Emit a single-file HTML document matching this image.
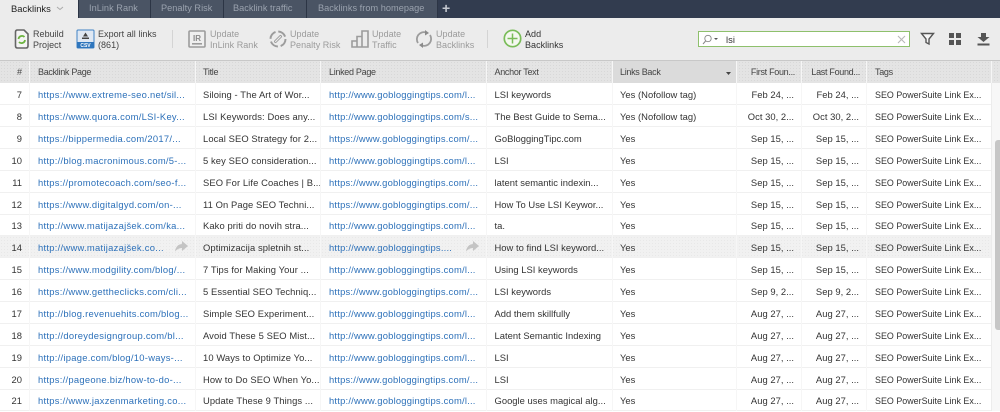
<!DOCTYPE html>
<html><head><meta charset="utf-8"><style>
html,body{margin:0;padding:0}
body{width:1000px;height:411px;overflow:hidden;position:relative;background:#fff;font-family:"Liberation Sans",sans-serif;font-size:9.4px;letter-spacing:.03px;color:#333}
#top{position:absolute;left:0;top:0;width:1000px;height:18px;background:#323c4f}
.tab{position:absolute;top:0;height:18px;background:#4a5464;border-right:1px solid #2c3545;color:#9aa2ae;line-height:17px;box-sizing:border-box;padding-left:10px;white-space:nowrap;font-size:9.2px}
#bar{position:absolute;left:0;top:18px;width:1000px;height:42px;background:#ececec;border-bottom:1px solid #c8c8c8}
.t{position:absolute;line-height:10.5px;white-space:nowrap;color:#444;font-size:9px}
.g{color:#9b9b9b}
svg{position:absolute;overflow:visible}
#hd{position:absolute;left:0;top:61px;width:1000px;height:22px;background-color:#e4e4e4;background-image:radial-gradient(#d8d8d8 .5px,transparent .6px);background-size:3px 3px}
.h{position:absolute;top:0;height:22px;line-height:23px;color:#444;white-space:nowrap;font-size:9px;letter-spacing:-.3px}
.sp{position:absolute;top:0;width:1px;height:22px;background:#f6f6f6}
.r{position:absolute;left:0;width:991px;height:22px;border-bottom:1px solid #f0f0f0;box-sizing:border-box;line-height:22px;white-space:nowrap}
.r span{position:absolute;top:1px}
.n{right:969px;color:#333}
.a{left:38px;color:#2c70b9;letter-spacing:.28px}
.b{left:203px;letter-spacing:.1px}
.c{left:329px;color:#2c70b9;letter-spacing:.22px}
.d{left:494.5px}
.e{left:620px}
.f{right:197px}
.l{right:132px}
.k{left:875px;font-size:8.9px}
.v{position:absolute;top:83px;width:1px;height:328px;background:#f6f6f6}
#sel{position:absolute;left:0;top:236px;width:991px;height:22px;background-color:#f1f1f1;background-image:radial-gradient(#e8e8e8 .5px,transparent .6px);background-size:3px 3px}
</style></head><body>
<div id="top"></div>
<div class="tab" style="left:0;width:79px;background:#ececec;color:#222;border-right:1px solid #2c3545;padding-left:11px;font-size:9.4px">Backlinks</div>
<svg style="left:56px;top:6px" width="8" height="5"><path d="M1 1 L4 3.5 L7 1" fill="none" stroke="#aaa" stroke-width="1"/></svg>
<div class="tab" style="left:79px;width:72px">InLink Rank</div>
<div class="tab" style="left:151px;width:73px">Penalty Risk</div>
<div class="tab" style="left:224px;width:83px;padding-left:9px">Backlink traffic</div>
<div class="tab" style="left:307px;width:131px;padding-left:11px">Backlinks from homepage</div>
<div style="position:absolute;left:442px;top:0;color:#c5c9d0;font-size:14px;line-height:17px;font-weight:bold">+</div>

<div id="bar"></div>
<svg style="left:14px;top:29px" width="15" height="20"><path d="M1.5 3 Q1.5 1 3.5 1 H10 L14 5 V17 Q14 19 12 19 H3.5 Q1.5 19 1.5 17 Z" fill="#f4f4f4" stroke="#666" stroke-width="1.6"/><path d="M4.5 10 A3.5 3.5 0 0 1 10.5 8" fill="none" stroke="#6cb33f" stroke-width="1.8"/><path d="M11 11 A3.5 3.5 0 0 1 5 13" fill="none" stroke="#6cb33f" stroke-width="1.8"/></svg>
<div class="t" style="left:33px;top:29px">Rebuild<br>Project</div>
<svg style="left:77px;top:30px" width="17" height="18"><rect x="0" y="0" width="17" height="18" rx="1" fill="#dfe8f3" stroke="#3f82c4"/><rect x="0" y="12" width="17" height="6" fill="#2f76bd"/><rect x="5" y="7.5" width="7" height="1.5" fill="#444"/><path d="M8.5 2.5 L11 6.5 H6 Z" fill="#444"/><text x="8.5" y="17" font-size="5" font-family="Liberation Sans" font-weight="bold" fill="#fff" text-anchor="middle" letter-spacing="0">CSV</text></svg>
<div class="t" style="left:98px;top:29px">Export all links<br>(861)</div>
<div style="position:absolute;left:172px;top:30px;width:1px;height:18px;background:#d4d4d4"></div>
<svg style="left:188px;top:30px" width="18" height="18"><rect x="1" y="1" width="16" height="16" rx="1" fill="#efefef" stroke="#9c9c9c" stroke-width="1.6"/><rect x="4" y="13" width="10" height="1.6" fill="#9c9c9c"/><text x="9" y="11" font-size="8" font-weight="bold" font-family="Liberation Sans" fill="#8a8a8a" text-anchor="middle" letter-spacing="0">IR</text></svg>
<div class="t g" style="left:210px;top:29px">Update<br>InLink Rank</div>
<svg style="left:269px;top:30px" width="18" height="18"><circle cx="9" cy="9" r="7.5" fill="none" stroke="#9c9c9c" stroke-width="2" stroke-dasharray="9 2.8"/><path d="M6.5 11.5 L11.5 6.5" stroke="#9c9c9c" stroke-width="3" stroke-linecap="round"/><path d="M6.5 11.5 L11.5 6.5" stroke="#ececec" stroke-width="1.2" stroke-linecap="round"/></svg>
<div class="t g" style="left:290px;top:29px">Update<br>Penalty Risk</div>
<svg style="left:351px;top:30px" width="18" height="18"><path d="M1 17 V11 H6 V17 Z M6 17 V6.5 H11 V17 Z M11 17 V1 H17 V17 Z" fill="none" stroke="#9c9c9c" stroke-width="1.6"/></svg>
<div class="t g" style="left:372px;top:29px">Update<br>Traffic</div>
<svg style="left:415px;top:30px" width="18" height="18"><path d="M3 13 A7 7 0 0 1 11 2.5" fill="none" stroke="#9c9c9c" stroke-width="1.8"/><path d="M15 5 A7 7 0 0 1 7 15.5" fill="none" stroke="#9c9c9c" stroke-width="1.8"/><path d="M10 0 L14 3 L10 5.5 Z M8 12.5 L4 15 L8 18 Z" fill="#8a8a8a"/></svg>
<div class="t g" style="left:436px;top:29px">Update<br>Backlinks</div>
<div style="position:absolute;left:487px;top:30px;width:1px;height:18px;background:#d4d4d4"></div>
<svg style="left:503px;top:29px" width="19" height="19"><circle cx="9.5" cy="9.5" r="8.2" fill="#f4f8ef" stroke="#79bc58" stroke-width="1.7"/><path d="M9.5 4.5 V14.5 M4.5 9.5 H14.5" stroke="#79bc58" stroke-width="1.5"/></svg>
<div class="t" style="left:525px;top:29px;color:#333">Add<br>Backlinks</div>
<div style="position:absolute;left:698px;top:31px;width:212px;height:16px;box-sizing:border-box;background:#fff;border:1px solid #8ec06c"></div>
<svg style="left:702px;top:34px" width="16" height="11"><circle cx="6" cy="4.5" r="3.2" fill="none" stroke="#888" stroke-width=".9"/><path d="M3.6 7 L1 10" stroke="#888" stroke-width="1"/><path d="M12 4 H16 L14 6 Z" fill="#555"/></svg>
<div style="position:absolute;left:726px;top:32px;line-height:15px;color:#333">lsi</div>
<svg style="left:897px;top:35px" width="9" height="9"><path d="M1 1 L8 8 M8 1 L1 8" stroke="#b8b8b8" stroke-width="1.1"/></svg>
<svg style="left:921px;top:33px" width="13" height="12"><path d="M.5 .5 H12.5 L8 6 V11 L5 9.5 V6 Z" fill="#f6f6f6" stroke="#555" stroke-width="1.4"/></svg>
<svg style="left:949px;top:33px" width="12" height="12"><path d="M0 0 H5 V5 H0 Z M7 0 H12 V5 H7 Z M0 7 H5 V12 H0 Z M7 7 H12 V12 H7 Z" fill="#555"/></svg>
<svg style="left:977px;top:33px" width="13" height="13"><path d="M4 0 H9 V4 H12.5 L6.5 9 L.5 4 H4 Z" fill="#555"/><rect x=".5" y="10.5" width="12" height="2" fill="#555"/></svg>

<div id="hd">
<div style="position:absolute;left:613px;top:0;width:123px;height:22px;background:#dbdbdb"></div>
<div class="h" style="left:17px">#</div>
<div class="h" style="left:38px">Backlink Page</div>
<div class="h" style="left:203px">Title</div>
<div class="h" style="left:329px">Linked Page</div>
<div class="h" style="left:494.5px">Anchor Text</div>
<div class="h" style="left:620px">Links Back</div>
<svg style="left:726px;top:11px" width="5" height="3"><path d="M0 0 H5 L2.5 3 Z" fill="#444"/></svg>
<div class="h" style="right:205px">First Foun...</div>
<div class="h" style="right:140px">Last Found...</div>
<div class="h" style="left:875px">Tags</div>
<div class="sp" style="left:29px"></div><div class="sp" style="left:195px"></div><div class="sp" style="left:320px"></div><div class="sp" style="left:486px"></div><div class="sp" style="left:612px"></div><div class="sp" style="left:736px"></div><div class="sp" style="left:801px"></div><div class="sp" style="left:866px"></div><div class="sp" style="left:991px"></div>
</div>

<div id="sel"></div>

<div class="r" style="top:83px"><span class="n">7</span><span class="a">https://www.extreme-seo.net/sil...</span><span class="b">Siloing - The Art of Wor...</span><span class="c">http://www.gobloggingtips.com/l...</span><span class="d">LSI keywords</span><span class="e">Yes (Nofollow tag)</span><span class="f">Feb 24, ...</span><span class="l">Feb 24, ...</span><span class="k">SEO PowerSuite Link Ex...</span></div>
<div class="r" style="top:105px"><span class="n">8</span><span class="a">https://www.quora.com/LSI-Key...</span><span class="b">LSI Keywords: Does any...</span><span class="c">http://www.gobloggingtips.com/s...</span><span class="d">The Best Guide to Sema...</span><span class="e">Yes (Nofollow tag)</span><span class="f">Oct 30, 2...</span><span class="l">Oct 30, 2...</span><span class="k">SEO PowerSuite Link Ex...</span></div>
<div class="r" style="top:127px"><span class="n">9</span><span class="a">https://bippermedia.com/2017/...</span><span class="b">Local SEO Strategy for 2...</span><span class="c">https://www.gobloggingtips.com/...</span><span class="d">GoBloggingTipc.com</span><span class="e">Yes</span><span class="f">Sep 15, ...</span><span class="l">Sep 15, ...</span><span class="k">SEO PowerSuite Link Ex...</span></div>
<div class="r" style="top:149px"><span class="n">10</span><span class="a">http://blog.macronimous.com/5-...</span><span class="b">5 key SEO consideration...</span><span class="c">http://www.gobloggingtips.com/l...</span><span class="d">LSI</span><span class="e">Yes</span><span class="f">Sep 15, ...</span><span class="l">Sep 15, ...</span><span class="k">SEO PowerSuite Link Ex...</span></div>
<div class="r" style="top:171px"><span class="n">11</span><span class="a">https://promotecoach.com/seo-f...</span><span class="b">SEO For Life Coaches | B...</span><span class="c">https://www.gobloggingtips.com/...</span><span class="d">latent semantic indexin...</span><span class="e">Yes</span><span class="f">Sep 15, ...</span><span class="l">Sep 15, ...</span><span class="k">SEO PowerSuite Link Ex...</span></div>
<div class="r" style="top:193px"><span class="n">12</span><span class="a">https://www.digitalgyd.com/on-...</span><span class="b">11 On Page SEO Techni...</span><span class="c">https://www.gobloggingtips.com/...</span><span class="d">How To Use LSI Keywor...</span><span class="e">Yes</span><span class="f">Sep 15, ...</span><span class="l">Sep 15, ...</span><span class="k">SEO PowerSuite Link Ex...</span></div>
<div class="r" style="top:214px"><span class="n">13</span><span class="a">http://www.matijazajšek.com/ka...</span><span class="b">Kako priti do novih stra...</span><span class="c">http://www.gobloggingtips.com/l...</span><span class="d">ta.</span><span class="e">Yes</span><span class="f">Sep 15, ...</span><span class="l">Sep 15, ...</span><span class="k">SEO PowerSuite Link Ex...</span></div>
<div class="r" style="top:236px"><span class="n">14</span><span class="a">http://www.matijazajšek.co...</span><span class="b">Optimizacija spletnih st...</span><span class="c">http://www.gobloggingtips....</span><span class="d">How to find LSI keyword...</span><span class="e">Yes</span><span class="f">Sep 15, ...</span><span class="l">Sep 15, ...</span><span class="k">SEO PowerSuite Link Ex...</span></div>
<div class="r" style="top:258px"><span class="n">15</span><span class="a">https://www.modgility.com/blog/...</span><span class="b">7 Tips for Making Your ...</span><span class="c">http://www.gobloggingtips.com/l...</span><span class="d">Using LSI keywords</span><span class="e">Yes</span><span class="f">Sep 15, ...</span><span class="l">Sep 15, ...</span><span class="k">SEO PowerSuite Link Ex...</span></div>
<div class="r" style="top:280px"><span class="n">16</span><span class="a">https://www.gettheclicks.com/cli...</span><span class="b">5 Essential SEO Techniq...</span><span class="c">https://www.gobloggingtips.com/...</span><span class="d">LSI keywords</span><span class="e">Yes</span><span class="f">Sep 9, 2...</span><span class="l">Sep 9, 2...</span><span class="k">SEO PowerSuite Link Ex...</span></div>
<div class="r" style="top:302px"><span class="n">17</span><span class="a">http://blog.revenuehits.com/blog...</span><span class="b">Simple SEO Experiment...</span><span class="c">http://www.gobloggingtips.com/l...</span><span class="d">Add them skillfully</span><span class="e">Yes</span><span class="f">Aug 27, ...</span><span class="l">Aug 27, ...</span><span class="k">SEO PowerSuite Link Ex...</span></div>
<div class="r" style="top:324px"><span class="n">18</span><span class="a">http://doreydesigngroup.com/bl...</span><span class="b">Avoid These 5 SEO Mist...</span><span class="c">http://www.gobloggingtips.com/l...</span><span class="d">Latent Semantic Indexing</span><span class="e">Yes</span><span class="f">Aug 27, ...</span><span class="l">Aug 27, ...</span><span class="k">SEO PowerSuite Link Ex...</span></div>
<div class="r" style="top:346px"><span class="n">19</span><span class="a">http://ipage.com/blog/10-ways-...</span><span class="b">10 Ways to Optimize Yo...</span><span class="c">http://www.gobloggingtips.com/l...</span><span class="d">LSI</span><span class="e">Yes</span><span class="f">Aug 27, ...</span><span class="l">Aug 27, ...</span><span class="k">SEO PowerSuite Link Ex...</span></div>
<div class="r" style="top:368px"><span class="n">20</span><span class="a">https://pageone.biz/how-to-do-...</span><span class="b">How to Do SEO When Yo...</span><span class="c">https://www.gobloggingtips.com/...</span><span class="d">LSI</span><span class="e">Yes</span><span class="f">Aug 27, ...</span><span class="l">Aug 27, ...</span><span class="k">SEO PowerSuite Link Ex...</span></div>
<div class="r" style="top:389px"><span class="n">21</span><span class="a">https://www.jaxzenmarketing.co...</span><span class="b">Update These 9 Things ...</span><span class="c">http://www.gobloggingtips.com/l...</span><span class="d">Google uses magical alg...</span><span class="e">Yes</span><span class="f">Aug 27, ...</span><span class="l">Aug 27, ...</span><span class="k">SEO PowerSuite Link Ex...</span></div>

<div class="v" style="left:29px"></div><div class="v" style="left:195px"></div><div class="v" style="left:320px"></div><div class="v" style="left:486px"></div><div class="v" style="left:612px"></div><div class="v" style="left:736px"></div><div class="v" style="left:801px"></div><div class="v" style="left:866px"></div>

<svg style="left:175px;top:241px" width="13" height="11"><path d="M7 0 L13 5 L7 10 V7 Q3 7 0 10.5 Q1 3.5 7 3 Z" fill="#c4c4c4"/></svg>
<svg style="left:466px;top:241px" width="13" height="11"><path d="M7 0 L13 5 L7 10 V7 Q3 7 0 10.5 Q1 3.5 7 3 Z" fill="#c4c4c4"/></svg>

<div style="position:absolute;left:991px;top:83px;width:9px;height:328px;background:#f7f7f7;border-left:1px solid #ececec;box-sizing:border-box"></div>
<div style="position:absolute;left:995px;top:140px;width:5px;height:190px;background:#c6c6c6;border-radius:3px 0 0 3px"></div>
</body></html>
